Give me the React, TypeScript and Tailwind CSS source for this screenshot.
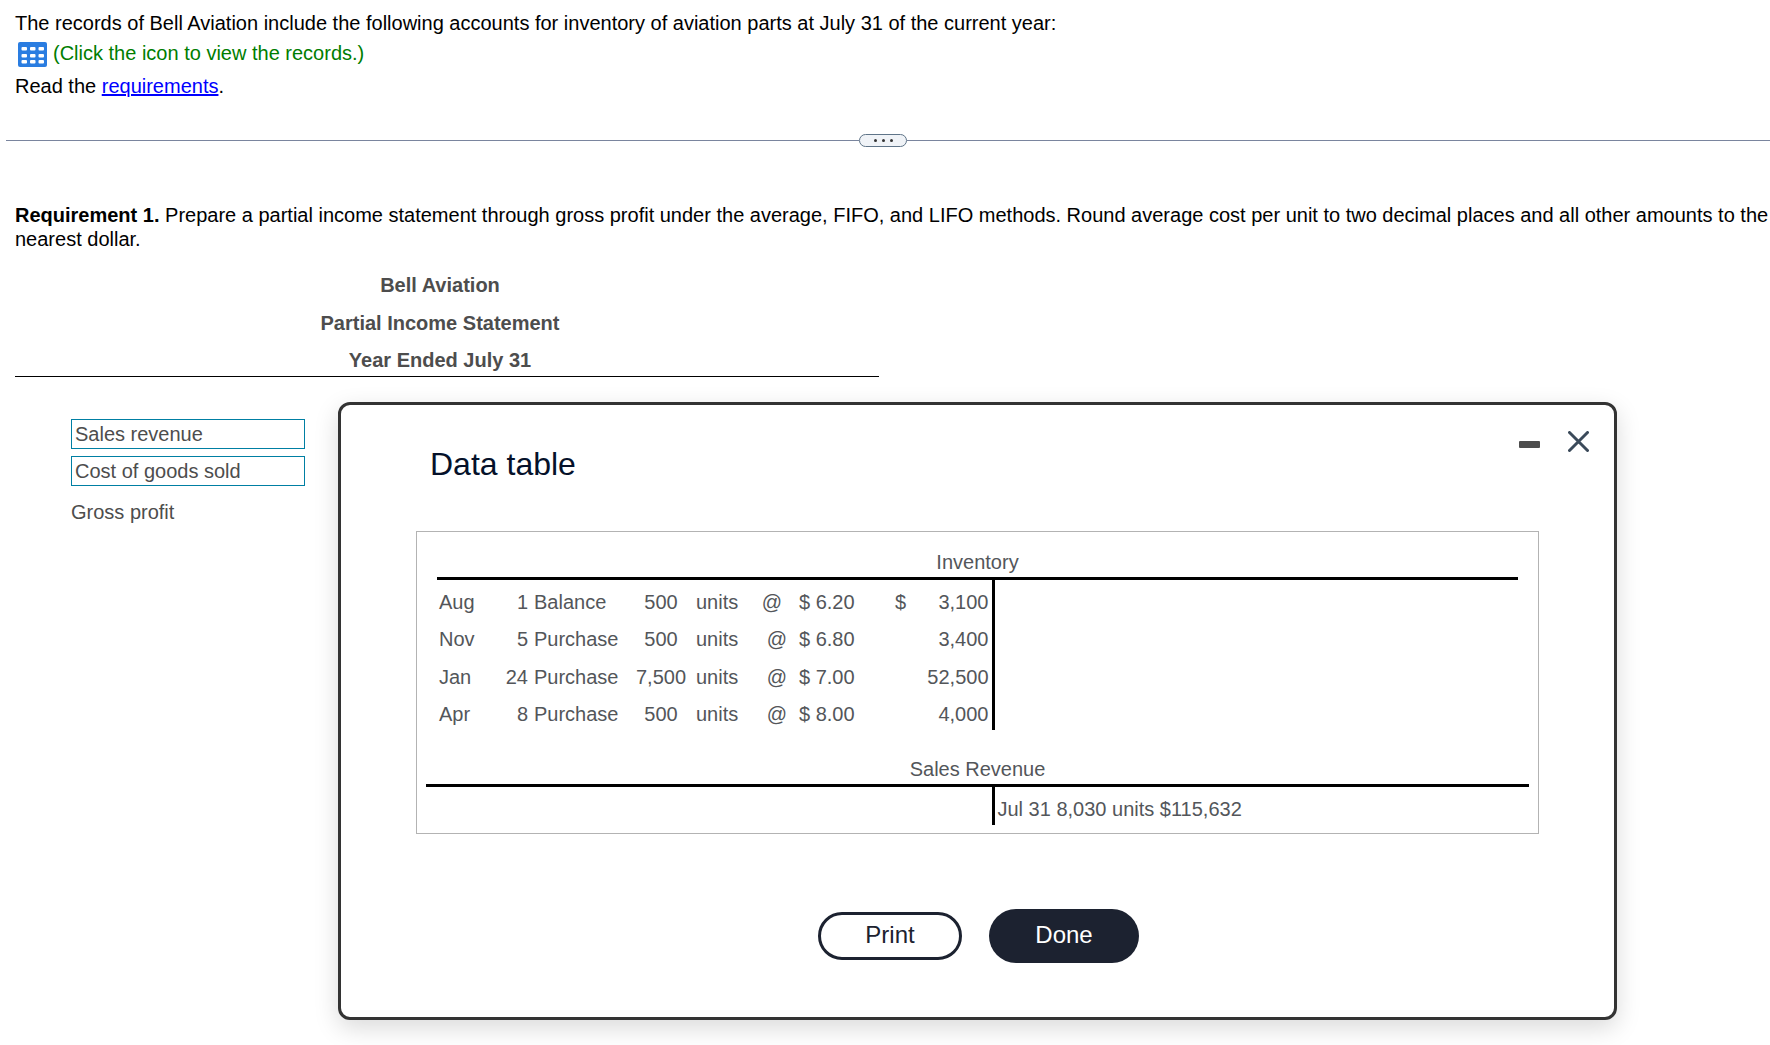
const entries = [
    { month: "Aug", day: 1, name: "Balance", units: "500", rate: "$ 6.20", sign: "$", amount: "3,100" },
    { month: "Nov", day: 5, name: "Purchase", units: "500", rate: "$ 6.80", sign: "", amount: "3,400" },
    { month: "Jan", day: 24, name: "Purchase", units: "7,500", rate: "$ 7.00", sign: "", amount: "52,500" },
    { month: "Apr", day: 8, name: "Purchase", units: "500", rate: "$ 8.00", sign: "", amount: "4,000" },
];

function RecordsIcon() {
    return (
        <svg width="29" height="25" viewBox="0 0 29 25" aria-hidden="true">
            <rect width="29" height="25" rx="2" fill="#2a7de1" />
            {[5, 12, 18].map((y) =>
                [3.5, 12, 20.5].map((x) => (
                    <rect key={`${x}-${y}`} x={x} y={y} width="5.5" height="3.5" rx="1" fill="#fff" />
                ))
            )}
        </svg>
    );
}

function Divider() {
    return (
        <div className="ml-1.5 flex h-[13px] items-center">
            <div className="h-px grow basis-0 bg-[#7a859e]" />
            <button
                type="button"
                aria-label="Resize panels"
                className="flex h-[13px] w-12 items-center justify-center gap-[5px] rounded-full border border-[#5f7488] bg-[#f0f3f7]"
            >
                <span className="size-[3px] rounded-full bg-[#333]" />
                <span className="size-[3px] rounded-full bg-[#333]" />
                <span className="size-[3px] rounded-full bg-[#333]" />
            </button>
            <div className="h-px grow basis-2.5 bg-[#7a859e]" />
        </div>
    );
}

function Statement() {
    return (
        <section className="text-[#4d4d4d]">
            <div className="w-[864px] max-w-full border-b border-black pb-px pr-3.5 text-center font-bold">
                <h2 className="h-[38px] leading-[37px]">Bell Aviation</h2>
                <h2 className="h-[37px] leading-[37px]">Partial Income Statement</h2>
                <h2 className="h-[33px] leading-[37px]">Year Ended July 31</h2>
            </div>
            <div className="ml-14 mt-[42px] flex w-[234px] flex-col gap-[7px]">
                <input
                    aria-label="Line item 1"
                    defaultValue="Sales revenue"
                    className="h-[30px] border border-[#007fa3] px-[3px]"
                />
                <input
                    aria-label="Line item 2"
                    defaultValue="Cost of goods sold"
                    className="h-[30px] border border-[#007fa3] px-[3px]"
                />
                <div className="pt-[7px]">Gross profit</div>
            </div>
        </section>
    );
}

function InventoryAccount() {
    return (
        <table className="mx-[11px] h-[150px] table-fixed border-collapse">
            <caption className="h-[33px] border-b-[3px] border-black text-center leading-[30px]">Inventory</caption>
            <colgroup>
                <col className="w-[43px]" />
                <col className="w-[50px]" />
                <col className="w-[98px]" />
                <col className="w-[66px]" />
                <col className="w-[55px]" />
                <col className="w-[46px]" />
                <col className="w-[70px]" />
                <col className="w-[41px]" />
                <col className="w-[87px]" />
                <col />
            </colgroup>
            <tbody>
                {entries.map((e, i) => (
                    <tr key={e.month}>
                        <td className="pl-0.5 pt-1.5">{e.month}</td>
                        <td className="pr-0.5 pt-1.5 text-right">{e.day}</td>
                        <td className="pl-1 pt-1.5">{e.name}</td>
                        <td className="pt-1.5 text-center">{e.units}</td>
                        <td className="pl-0.5 pt-1.5">units</td>
                        <td className={i === 0 ? "pt-1.5 text-center" : "pr-2 pt-1.5 text-right"}>@</td>
                        <td className="pl-1 pt-1.5">{e.rate}</td>
                        <td className="pt-1.5 text-right">{e.sign}</td>
                        <td className="border-r-[3px] border-black pr-[3px] pt-1.5 text-right">{e.amount}</td>
                        <td />
                    </tr>
                ))}
            </tbody>
        </table>
    );
}

function SalesAccount() {
    return (
        <table className="w-full table-fixed border-collapse">
            <caption className="h-[33px] border-b-[3px] border-black text-center leading-[30px]">Sales Revenue</caption>
            <colgroup>
                <col className="w-[567px]" />
                <col />
            </colgroup>
            <tbody>
                <tr className="h-[38px]">
                    <td className="border-r-[3px] border-black" />
                    <td className="pl-[3px] pt-1.5">Jul 31 8,030 units $115,632</td>
                </tr>
            </tbody>
        </table>
    );
}

function DataTableDialog() {
    return (
        <div
            role="dialog"
            aria-labelledby="dialog-title"
            className="absolute left-[338px] top-[402px] w-[1279px] rounded-xl border-[3px] border-[#333] bg-white px-[75px] pb-[54px] shadow-[0_8px_24px_rgba(0,0,0,0.15)]"
        >
            <div className="flex h-[126px] justify-between">
                <h1 id="dialog-title" className="pl-3.5 pt-[39px] text-[32px] leading-10 text-[#05112a]">
                    Data table
                </h1>
                <div className="-mr-[50px] flex items-start gap-7 pt-[26px]">
                    <button type="button" aria-label="Minimize" className="flex h-[21px] items-end pb-1">
                        <span className="h-[7px] w-[21px] rounded-[1px] bg-[#4d4d4d]" />
                    </button>
                    <button type="button" aria-label="Close">
                        <svg width="21" height="21" viewBox="0 0 21 21" stroke="#3b4a5a" strokeWidth="3" strokeLinecap="round">
                            <path d="M1.5 1.5l18 18M19.5 1.5l-18 18" />
                        </svg>
                    </button>
                </div>
            </div>
            <div className="flex flex-col border border-[#b3b3b3] px-[9px] pb-2 pt-[15px] text-[#53565a]">
                <InventoryAccount />
                <div className="h-6" />
                <SalesAccount />
            </div>
            <div className="mt-[75px] flex items-center justify-center gap-[27px] pl-0.5 text-2xl">
                <button type="button" className="h-12 w-36 rounded-full border-[3px] border-[#1c2230] pb-0.5 text-[#1c2230]">
                    Print
                </button>
                <button type="button" className="h-[54px] w-[150px] rounded-full bg-[#1c2230] pb-0.5 text-white">
                    Done
                </button>
            </div>
        </div>
    );
}

export default function App() {
    return (
        <main className="relative min-h-screen bg-white font-['Liberation_Sans',Arial,sans-serif] text-[20px] leading-6 text-black">
            <div className="flex flex-col items-start pl-[15px] pt-[11px]">
                <p>The records of Bell Aviation include the following accounts for inventory of aviation parts at July 31 of the current year:</p>
                <button type="button" className="mt-[7px] flex gap-1.5 pl-[3px] text-[#007d00]">
                    <RecordsIcon />
                    <span className="-mt-px">(Click the icon to view the records.)</span>
                </button>
                <p className="mt-[7px]">
                    Read the{" "}
                    <a href="#requirements" className="text-[#0000ff] underline">
                        requirements
                    </a>
                    .
                </p>
            </div>
            <div className="pt-9">
                <Divider />
            </div>
            <div className="pl-[15px] pt-14">
                <p>
                    <b>Requirement 1.</b> Prepare a partial income statement through gross profit under the average, FIFO, and
                    LIFO methods. Round average cost per unit to two decimal places and all other amounts to the nearest dollar.
                </p>
                <div className="pt-4">
                    <Statement />
                </div>
            </div>
            <DataTableDialog />
        </main>
    );
}
